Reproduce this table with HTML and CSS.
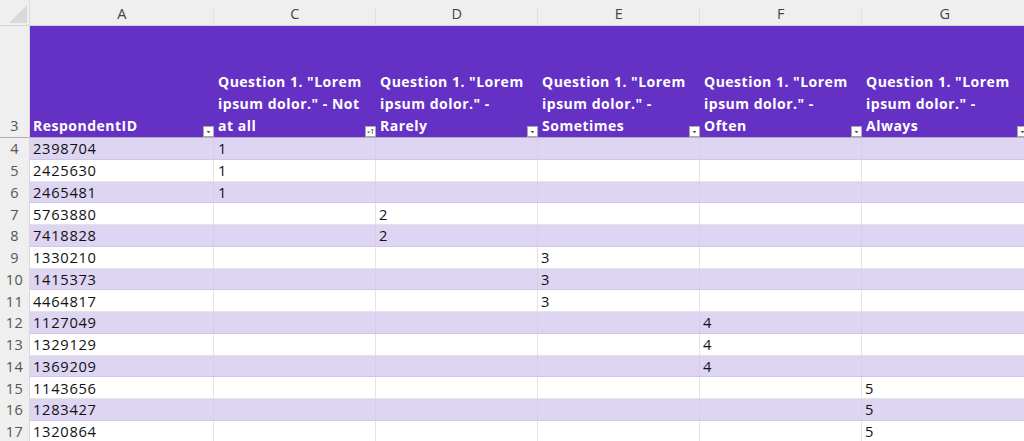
FILE: index.html
```html
<!DOCTYPE html>
<html>
<head>
<meta charset="utf-8">
<link rel="stylesheet" href="styles.css">
</head>
<body>
<div class="sheet">
  <div class="corner"><span class="tri"></span></div>
  <div class="col">A</div>
  <div class="col">C</div>
  <div class="col">D</div>
  <div class="col">E</div>
  <div class="col">F</div>
  <div class="col">G</div>

  <div class="rn rn-h">3</div>
  <div class="th"><span class="tt">RespondentID</span><span class="fb"><svg viewBox="0 0 9 9"><path d="M2.5 4h4l-2 2.2z" fill="#555"/></svg></span></div>
  <div class="th"><span class="tt">Question 1. "Lorem ipsum dolor." - Not at all</span><span class="fb"><svg viewBox="0 0 9 9"><path d="M1 4.5h3.2l-1.6 1.8z" fill="#555"/><path d="M6.3 7V2M5 3.3l1.3-1.3 1.3 1.3" stroke="#555" stroke-width="0.8" fill="none"/></svg></span></div>
  <div class="th"><span class="tt">Question 1. "Lorem ipsum dolor." - Rarely</span><span class="fb"><svg viewBox="0 0 9 9"><path d="M2.5 4h4l-2 2.2z" fill="#555"/></svg></span></div>
  <div class="th"><span class="tt">Question 1. "Lorem ipsum dolor." - Sometimes</span><span class="fb"><svg viewBox="0 0 9 9"><path d="M2.5 4h4l-2 2.2z" fill="#555"/></svg></span></div>
  <div class="th"><span class="tt">Question 1. "Lorem ipsum dolor." - Often</span><span class="fb"><svg viewBox="0 0 9 9"><path d="M2.5 4h4l-2 2.2z" fill="#555"/></svg></span></div>
  <div class="th"><span class="tt">Question 1. "Lorem ipsum dolor." - Always</span><span class="fb"><svg viewBox="0 0 9 9"><path d="M2.5 4h4l-2 2.2z" fill="#555"/></svg></span></div>

  <div class="rn">4</div><div class="td b">2398704</div><div class="td b">1</div><div class="td b"></div><div class="td b"></div><div class="td b"></div><div class="td b"></div>
  <div class="rn">5</div><div class="td">2425630</div><div class="td">1</div><div class="td"></div><div class="td"></div><div class="td"></div><div class="td"></div>
  <div class="rn">6</div><div class="td b">2465481</div><div class="td b">1</div><div class="td b"></div><div class="td b"></div><div class="td b"></div><div class="td b"></div>
  <div class="rn">7</div><div class="td">5763880</div><div class="td"></div><div class="td">2</div><div class="td"></div><div class="td"></div><div class="td"></div>
  <div class="rn">8</div><div class="td b">7418828</div><div class="td b"></div><div class="td b">2</div><div class="td b"></div><div class="td b"></div><div class="td b"></div>
  <div class="rn">9</div><div class="td">1330210</div><div class="td"></div><div class="td"></div><div class="td">3</div><div class="td"></div><div class="td"></div>
  <div class="rn">10</div><div class="td b">1415373</div><div class="td b"></div><div class="td b"></div><div class="td b">3</div><div class="td b"></div><div class="td b"></div>
  <div class="rn">11</div><div class="td">4464817</div><div class="td"></div><div class="td"></div><div class="td">3</div><div class="td"></div><div class="td"></div>
  <div class="rn">12</div><div class="td b">1127049</div><div class="td b"></div><div class="td b"></div><div class="td b"></div><div class="td b">4</div><div class="td b"></div>
  <div class="rn">13</div><div class="td">1329129</div><div class="td"></div><div class="td"></div><div class="td"></div><div class="td">4</div><div class="td"></div>
  <div class="rn">14</div><div class="td b">1369209</div><div class="td b"></div><div class="td b"></div><div class="td b"></div><div class="td b">4</div><div class="td b"></div>
  <div class="rn">15</div><div class="td">1143656</div><div class="td"></div><div class="td"></div><div class="td"></div><div class="td"></div><div class="td">5</div>
  <div class="rn">16</div><div class="td b">1283427</div><div class="td b"></div><div class="td b"></div><div class="td b"></div><div class="td b"></div><div class="td b">5</div>
  <div class="rn">17</div><div class="td">1320864</div><div class="td"></div><div class="td"></div><div class="td"></div><div class="td"></div><div class="td">5</div>
</div>
</body>
</html>
```

FILE: styles.css
```css
html, body {
  margin: 0;
  padding: 0;
  overflow: hidden;
  background: #ffffff;
}
.sheet {
  display: grid;
  grid-template-columns: 30px 184px 162px 162px 162px 162px 166px;
  grid-template-rows: 26px 112px repeat(14, 21.75px);
  width: 1030px;
  font-family: "Open Sans", "Liberation Sans", sans-serif;
}
.corner {
  background: #efefef;
  border-right: 1px solid #dadada;
  border-bottom: 1px solid #d6d6d6;
  box-sizing: border-box;
  position: relative;
}
.tri {
  position: absolute;
  right: 2px;
  bottom: 2px;
  width: 0;
  height: 0;
  border-left: 18px solid transparent;
  border-bottom: 18px solid #d9d9d9;
}
.col {
  background: #efefef;
  border-bottom: 1px solid #d6d6d6;
  box-sizing: border-box;
  color: #444;
  font-size: 14.5px;
  letter-spacing: 0.3px;
  display: flex;
  align-items: center;
  justify-content: center;
  padding-top: 1px;
  position: relative;
}
.col::after {
  content: "";
  position: absolute;
  right: 0;
  top: 8px;
  bottom: 0;
  width: 1px;
  background: #e0e0e0;
}
.rn {
  background: #efefef;
  color: #555;
  font-size: 14.5px;
  letter-spacing: 0.4px;
  display: flex;
  align-items: center;
  justify-content: center;
  border-right: 1px solid #d8d8d8;
  box-sizing: border-box;
}
.rn-h {
  align-items: flex-end;
  padding-bottom: 2px;
  border-bottom: 1px solid #b3adc4;
}
.th {
  position: relative;
  background: #6431c4;
  color: #ffffff;
  font-weight: 700;
  font-size: 14px;
  letter-spacing: 0.5px;
  line-height: 22px;
  display: flex;
  align-items: flex-end;
  padding-left: 4px;
  padding-right: 8px;
  border-bottom: 1px solid #b3adc4;
  box-sizing: border-box;
}
.th:nth-child(9) {
  padding-left: 3px;
}
.tt {
  flex: 1;
}
.fb {
  position: absolute;
  right: 0;
  bottom: 0;
  width: 11px;
  height: 11px;
  background: #ffffff;
  border: 1px solid #a9a9a9;
  box-sizing: border-box;
  display: flex;
}
.fb svg {
  width: 9px;
  height: 9px;
}
.td {
  font-size: 14.7px;
  letter-spacing: 0.7px;
  color: #111;
  padding-left: 3px;
  display: flex;
  align-items: center;
  border-right: 1px solid #e4e4e4;
  border-bottom: 1px solid #e4e4e4;
  box-sizing: border-box;
  background: #ffffff;
}
.td.b {
  background: #ded5f3;
  border-right-color: #d6cdec;
  border-bottom-color: #d0c6ea;
}
.td:nth-child(7n+3) {
  padding-left: 4px;
}
```
